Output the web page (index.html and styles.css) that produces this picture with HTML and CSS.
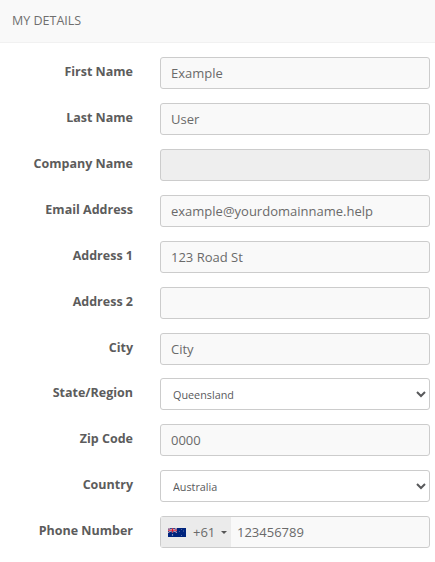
FILE: index.html
```html
<!DOCTYPE html>
<html lang="en">
<head>
  <meta charset="UTF-8">
  <title>My Details</title>
  <link rel="stylesheet" href="styles.css">
</head>
<body>
  <div class="panel-heading">My Details</div>
  <form class="details-form">
    <div class="form-row">
      <label for="first-name">First Name</label>
      <input type="text" id="first-name" value="Example">
    </div>
    <div class="form-row">
      <label for="last-name">Last Name</label>
      <input type="text" id="last-name" value="User">
    </div>
    <div class="form-row">
      <label for="company">Company Name</label>
      <input type="text" id="company" disabled>
    </div>
    <div class="form-row">
      <label for="email">Email Address</label>
      <input type="text" id="email" value="example@yourdomainname.help">
    </div>
    <div class="form-row">
      <label for="address-1">Address 1</label>
      <input type="text" id="address-1" value="123 Road St">
    </div>
    <div class="form-row">
      <label for="address-2">Address 2</label>
      <input type="text" id="address-2">
    </div>
    <div class="form-row">
      <label for="city">City</label>
      <input type="text" id="city" value="City">
    </div>
    <div class="form-row">
      <label for="state">State/Region</label>
      <select id="state">
        <option>Queensland</option>
      </select>
    </div>
    <div class="form-row">
      <label for="zip">Zip Code</label>
      <input type="text" id="zip" value="0000">
    </div>
    <div class="form-row">
      <label for="country">Country</label>
      <select id="country">
        <option>Australia</option>
      </select>
    </div>
    <div class="form-row">
      <label for="phone">Phone Number</label>
      <div class="phone-field">
        <div class="dial-code">
          <svg class="flag" width="18" height="9" viewBox="0 0 18 9">
            <rect width="18" height="9" fill="#00247d"/>
            <path d="M0 0L9 4.5M9 0L0 4.5" stroke="#e8b4c0" stroke-width="1"/>
            <path d="M4.5 0V4.5M0 2.25H9" stroke="#f4d0d8" stroke-width="1.5"/>
            <path d="M4.5 0V4.5M0 2.25H9" stroke="#cf142b" stroke-width="0.9"/>
            <g fill="#c8d0e8">
              <circle cx="4.5" cy="6.9" r="0.7"/>
              <circle cx="13.5" cy="1.4" r="0.4"/>
              <circle cx="13.5" cy="7.5" r="0.4"/>
              <circle cx="11.3" cy="3.6" r="0.4"/>
              <circle cx="15.6" cy="3" r="0.4"/>
            </g>
          </svg>
          <span class="code">+61</span>
          <span class="caret"></span>
        </div>
        <input type="text" id="phone" value="123456789">
      </div>
    </div>
  </form>
</body>
</html>
```

FILE: styles.css
```css
body {
  margin: 0;
  font-family: "Open Sans", sans-serif;
  font-size: 14px;
  color: #58595b;
  background-color: #fff;
}

.panel-heading {
  height: 43px;
  line-height: 41px;
  padding-left: 12px;
  font-size: 12.5px;
  text-transform: uppercase;
  color: #6f6f6f;
  background-color: #f9f9f9;
  border-bottom: 1px solid #f1f1f1;
  box-sizing: border-box;
}

.details-form {
  padding: 14px 5px 0 0;
}

.form-row {
  display: grid;
  grid-template-columns: 133px 270px;
  column-gap: 27px;
  margin-bottom: 13.925px;
}

label {
  text-align: right;
  font-size: 12.5px;
  font-weight: 700;
  line-height: 30px;
  color: #5c5c5c;
}

input[type="text"] {
  width: 100%;
  height: 32px;
  box-sizing: border-box;
  padding: 0 10px;
  font-family: inherit;
  font-size: 13px;
  color: #6a6a6a;
  background-color: #f9f9f9;
  border: 1px solid #ccc;
  border-radius: 3px;
}

input[type="text"]:disabled {
  background-color: #eee;
}

select {
  width: 100%;
  height: 32px;
  box-sizing: border-box;
  padding: 0 8px;
  font-family: inherit;
  font-size: 10.8px;
  color: #58595b;
  background-color: #fff;
  border: 1px solid #ccc;
  border-radius: 3px;
}

.phone-field {
  display: flex;
  height: 32px;
  box-sizing: border-box;
  background-color: #f9f9f9;
  border: 1px solid #ccc;
  border-radius: 3px;
}

.phone-field input[type="text"] {
  flex: 1;
  min-width: 0;
  height: 30px;
  padding: 0 6px;
  border: none;
  background: none;
}

.dial-code {
  display: flex;
  align-items: center;
  width: 70px;
  padding-left: 7px;
  box-sizing: border-box;
  background-color: #ebebeb;
}

.flag {
  flex: none;
}

.code {
  margin-left: 7px;
  font-size: 13px;
  color: #6a6a6a;
}

.caret {
  margin-left: 6px;
  border-left: 3px solid transparent;
  border-right: 3px solid transparent;
  border-top: 3px solid #555;
}
```
